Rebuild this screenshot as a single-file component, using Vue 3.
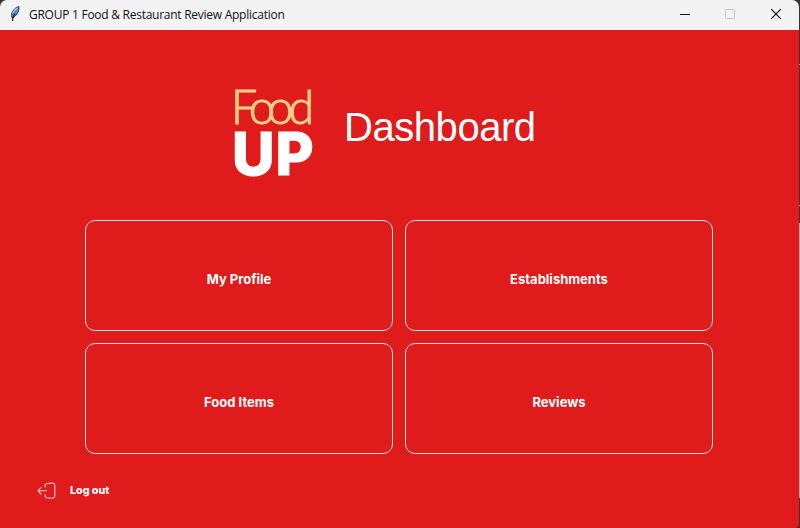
<script setup>
const cards = ['My Profile', 'Establishments', 'Food Items', 'Reviews']
const edge = ['dark first', 'tick', 'dark second', 'tick', 'dark third', 'light', 'dark last']
</script>

<template>
  <div class="desktop">
    <div class="window">
      <header class="titlebar">
        <svg class="feather" width="14" height="18" viewBox="0 0 14 18">
          <path d="M4.500 13.500 3.500 10.500C3.500 7 6 3 10.800 1.500 11.500 5 9.800 9.500 5.500 12.500Z" fill="#4f8fe0" stroke="#30343c" stroke-width="1" />
          <path d="M5 8.500C5.500 6 7.500 3.800 9.500 2.700" stroke="#a9cdf5" stroke-width="1.200" fill="none" />
          <path d="M7.200 8.500 5 12 4.500 16" stroke="#101010" stroke-width="1.100" fill="none" />
        </svg>
        <span class="title">GROUP 1 Food &amp; Restaurant Review Application</span>
        <svg class="controls" width="110" height="30" viewBox="0 0 110 30" fill="none">
          <path d="M5 14.500H15" stroke="#111" />
          <rect x="50.500" y="9.500" width="9" height="9" rx=".7" stroke="#c4c4c4" />
          <path d="M96.200 9.200 105.800 18.800M105.800 9.200 96.200 18.800" stroke="#111" stroke-width="1.200" />
        </svg>
      </header>
      <main class="content">
        <div class="heading">
          <svg class="logo" width="82" height="90" viewBox="0 0 82 90">
            <text class="food" x="-3 15 33.500 54.500" y="34.500">Food</text>
            <text class="up" x="-2 41.500" y="86">UP</text>
          </svg>
          <h1>Dashboard</h1>
        </div>
        <div class="grid">
          <button v-for="card in cards" :key="card" class="card">{{ card }}</button>
        </div>
        <button class="logout">
          <svg width="20" height="18" viewBox="0 0 20 18" fill="none" stroke="#fff" stroke-opacity=".8" stroke-width="1.100" stroke-linecap="round" stroke-linejoin="round">
            <path d="M8 5V3.500Q8 2 9.500 1.700L14 1.100Q17.800.8 17.800 3.500V13.500Q17.800 16.500 14.500 16.200L9.500 15.700Q8 15.500 8 14V12.500" />
            <path d="M9.500 8.800H1M4 5.500 1 8.800 4 12" />
          </svg>
          <span>Log out</span>
        </button>
      </main>
    </div>
    <div class="edge"><i v-for="(part, i) in edge" :key="i" :class="part"></i></div>
  </div>
</template>

<style>
body { margin: 0; background: #333; }
</style>

<style scoped>
.desktop { display: flex; width: 800px; height: 528px; background: #333; overflow: hidden; }
.window { width: 799px; height: 528px; border-radius: 7px 7px 4px 0; overflow: hidden; background: #df1b1b; }
.titlebar { display: flex; align-items: center; height: 30px; background: #f3f3f3; }
.feather { margin: -2px 0 0 8px; }
.title { margin-left: 7px; font: 12px/30px "Open Sans", "Noto Sans", sans-serif; letter-spacing: -0.26px; color: #111; white-space: nowrap; }
.controls { margin-left: auto; margin-right: 14px; }
.content { height: 498px; }
.heading { display: flex; height: 190px; padding-left: 234px; box-sizing: border-box; }
.logo { margin-top: 59px; overflow: visible; }
.food { font: 300 46.500px "Lato", sans-serif; fill: #f9d08a; stroke: #f9d08a; stroke-width: 1px; }
.up { font: 800 58.500px "Inter", sans-serif; fill: #fff; stroke: #fff; stroke-width: 1px; }
h1 { margin: 74px 0 0 28px; font: 400 40px/46px "Liberation Sans", Arial, sans-serif; letter-spacing: -0.450px; color: #fff; }
.grid { display: grid; grid-template-columns: 308px 308px; grid-auto-rows: 111px; gap: 12px; padding-left: 85px; }
.card { background: transparent; border: 1px solid #f4dce0; border-radius: 10px; color: #fff; font: 700 13px/18px "Inter", sans-serif; padding: 7px 0 0; }
.logout { display: flex; align-items: center; gap: 13px; margin: 28px 0 0 37px; padding: 0; border: 0; background: transparent; color: #fff; font: 800 10.700px/18px "Inter", sans-serif; }
.edge { display: flex; flex-direction: column; width: 1px; }
.dark { background: #363636; }
.tick { height: 1px; background: #a0a0a0; }
.first { height: 64px; }
.second { height: 140px; }
.third { height: 17px; }
.light { height: 275px; background: #a6a6a6; }
.last { flex: 1; }
</style>
